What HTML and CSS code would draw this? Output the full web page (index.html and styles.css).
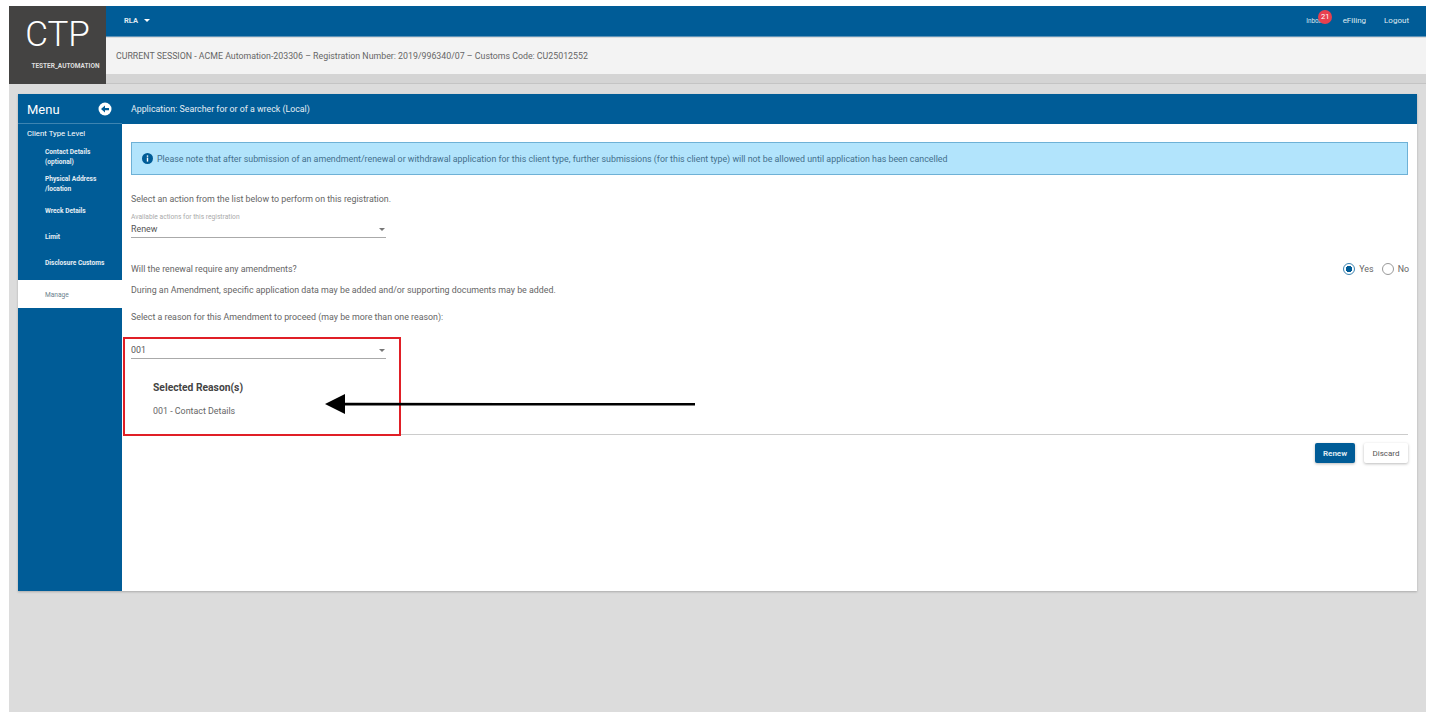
FILE: index.html
```html
<!DOCTYPE html>
<html lang="en">
<head>
  <meta charset="UTF-8" />
  <title>CTP - Manage</title>
  <link rel="stylesheet" href="styles.css">
</head>
<body>

  <div class="app">
    <header class="top">
      <div class="logo">
        <div class="logo-name">CTP</div>
        <div class="logo-user">TESTER_AUTOMATION</div>
      </div>
      <div class="top-right">
        <div class="nav">
          <div class="nav-role">RLA <span class="nav-caret"></span></div>
          <div class="nav-links">
            <span class="inbox">Inbox<span class="badge">21</span></span>
            <span>eFiling</span>
            <span>Logout</span>
          </div>
        </div>
        <div class="session">CURRENT SESSION - ACME Automation-203306 – Registration Number: 2019/996340/07 – Customs Code: CU25012552</div>
        <div class="session-foot"></div>
      </div>
    </header>

    <div class="card">
      <aside class="side">
        <div class="side-head">
          <span>Menu</span>
          <svg class="side-icon" width="14" height="14" viewBox="0 0 14 14">
            <circle cx="7" cy="7" r="6.5" fill="#fff"/>
            <path d="M3 7l4-3.4V6h4v2.2H7v2.3z" fill="#005c97"/>
          </svg>
        </div>
        <div class="side-level">Client Type Level</div>
        <ul class="side-list">
          <li class="two">Contact Details<br>(optional)</li>
          <li class="two">Physical Address<br>/location</li>
          <li>Wreck Details</li>
          <li>Limit</li>
          <li>Disclosure Customs</li>
          <li class="active">Manage</li>
        </ul>
      </aside>

      <main class="main">
        <div class="main-head">Application: Searcher for or of a wreck (Local)</div>
        <div class="main-body">
          <div class="note">
            <svg width="11" height="11" viewBox="0 0 11 11">
              <circle cx="5.5" cy="5.5" r="5.5" fill="#005c97"/>
              <rect x="4.8" y="4.6" width="1.4" height="4" fill="#fff"/>
              <rect x="4.8" y="2.4" width="1.4" height="1.4" fill="#fff"/>
            </svg>
            Please note that after submission of an amendment/renewal or withdrawal application for this client type, further submissions (for this client type) will not be allowed until application has been cancelled
          </div>

          <p class="line first">Select an action from the list below to perform on this registration.</p>
          <div class="select with-label">
            <label>Available actions for this registration</label>
            <div class="select-val">Renew<span class="caret"></span></div>
          </div>

          <div class="question">
            <span>Will the renewal require any amendments?</span>
            <div class="radios">
              <span class="radio on"></span> Yes
              <span class="radio no"></span> No
            </div>
          </div>
          <p class="line during">During an Amendment, specific application data may be added and/or supporting documents may be added.</p>
          <p class="line reason">Select a reason for this Amendment to proceed (may be more than one reason):</p>

          <div class="select code">
            <div class="select-val">001<span class="caret"></span></div>
          </div>

          <div class="selected">
            <h4>Selected Reason(s)</h4>
            <p>001 - Contact Details</p>
          </div>

          <div class="actions">
            <button class="btn primary">Renew</button>
            <button class="btn">Discard</button>
          </div>
        </div>
      </main>
    </div>
  </div>

  <div class="mark-box"></div>
  <svg class="mark-arrow" width="372" height="22" viewBox="0 0 372 22">
    <path d="M0 11L20 1v8.800L370 10v2.400L20 12.600V21z" fill="#000"/>
  </svg>

</body>
</html>
```

FILE: styles.css
```css
* {
  box-sizing: border-box;
}
html, body {
  height: 100%;
}
body {
  margin: 0;
  background: #fff;
  font-family: Roboto, "Liberation Sans", sans-serif;
  color: #555;
  overflow: hidden;
}
.app {
  position: absolute;
  left: 9px;
  top: 6px;
  width: 1417px;
  height: 706px;
  background: #dcdcdc;
}
.top {
  display: flex;
  height: 78px;
}
.logo {
  width: 97px;
  background: #444342;
  color: #fff;
  text-align: center;
}
.logo-name {
  font-size: 35px;
  font-weight: 300;
  line-height: 40px;
  padding-top: 9px;
}
.logo-user {
  font-size: 6.500px;
  font-weight: 700;
  line-height: 8px;
  margin-top: 7px;
  padding-left: 16px;
  color: #ddd;
}
.top-right {
  flex: 1;
}
.nav {
  height: 31px;
  background: #005c97;
  border-bottom: 1px solid #5d93b8;
  color: #dfeaf2;
  display: flex;
  justify-content: space-between;
  align-items: center;
  padding: 0 17px 2px 18px;
  font-size: 8px;
}
.nav-role {
  font-size: 7.500px;
  font-weight: 700;
}
.nav-caret {
  display: inline-block;
  border: 3px solid transparent;
  border-top-color: #fff;
  border-bottom: 0;
  margin: 0 0 1px 4px;
}
.nav-links {
  display: flex;
  align-items: baseline;
  gap: 18px;
}
.inbox {
  position: relative;
  font-size: 6.300px;
  padding-right: 3px;
}
.badge {
  position: absolute;
  left: 12px;
  top: -7px;
  width: 14px;
  height: 14px;
  line-height: 14px;
  text-align: center;
  border-radius: 50%;
  background: #e8404f;
  color: #fff;
  font-size: 7.500px;
}
.session {
  height: 36px;
  margin-top: 1px;
  background: #f3f3f3;
  padding-left: 10px;
  line-height: 36px;
  font-size: 8.800px;
  color: #666;
}
.session-foot {
  height: 10px;
  background: #d4d4d4;
  border-bottom: 1px solid #c4c4c4;
}
.card {
  display: flex;
  margin: 10px 9px 0;
  height: 497px;
  box-shadow: 0 1px 2px #aaa;
}
.side {
  width: 104px;
  background: #005c97;
  color: #e6eef4;
  flex: none;
}
.side-head {
  height: 30px;
  display: flex;
  justify-content: space-between;
  align-items: center;
  padding: 1px 10px 0 9px;
  font-size: 13px;
  color: #fff;
  border-bottom: 1px solid #3d84b1;
}
.side-level {
  padding: 5px 0 0 9px;
  font-size: 7.800px;
  line-height: 10px;
  height: 15px;
  color: #fff;
}
.side-list {
  list-style: none;
  margin: 8px 0 0;
  padding: 0;
  font-size: 6.600px;
  font-weight: 700;
}
.side-list li {
  height: 26px;
  padding: 5px 0 0 27px;
  line-height: 10px;
}
.side-list li.two {
  padding-top: 0;
  height: 27px;
}
.side-list li.active {
  background: #fff;
  color: #6b7f8e;
  font-weight: 400;
  height: 28px;
  padding-top: 10px;
  margin-top: 1px;
}
.main {
  flex: 1;
  background: #fff;
}
.main-head {
  height: 30px;
  background: #005c97;
  color: #e6eef4;
  padding-left: 9px;
  line-height: 31px;
  font-size: 8.800px;
}
.main-body {
  padding: 18px 9px 0 9px;
  font-size: 8.850px;
  line-height: 12px;
  color: #666;
}
.note {
  height: 33px;
  background: #b2e4fc;
  border: 1px solid #6eb1d6;
  display: flex;
  align-items: center;
  gap: 4px;
  padding-left: 10px;
  color: #44708c;
}
.line {
  margin: 0;
}
.line.first {
  margin-top: 18px;
}
.select {
  width: 255px;
  border-bottom: 1px solid #aaa;
}
.with-label {
  margin-top: 8px;
}
.select label {
  display: block;
  font-size: 6.700px;
  color: #aaa;
  line-height: 8px;
}
.select-val {
  display: flex;
  justify-content: space-between;
  align-items: center;
  height: 16px;
  color: #555;
}
.caret {
  border: 3px solid transparent;
  border-top-color: #777;
  border-bottom: 0;
  margin-right: 1px;
}
.question {
  display: flex;
  justify-content: space-between;
  align-items: center;
  margin-top: 25px;
  height: 12px;
}
.radios {
  display: flex;
  align-items: center;
  gap: 4px;
  margin-right: -1px;
}
.radio {
  width: 12px;
  height: 12px;
  border-radius: 50%;
  border: 1px solid #999;
  background: #fff;
}
.radio.on {
  border-color: #3d84b1;
  background: radial-gradient(circle, #005c97 3px, #fff 3.500px);
}
.radio.no {
  margin-left: 4px;
}
.during {
  margin-top: 9px;
}
.reason {
  margin-top: 15px;
}
.code {
  margin-top: 19px;
}
.selected {
  padding: 23px 0 0 22px;
  height: 76px;
  border-bottom: 1px solid #ccc;
}
.selected h4 {
  margin: 0;
  font-size: 10.300px;
  font-weight: 700;
  color: #444;
}
.selected p {
  margin: 11px 0 0;
  font-size: 8.900px;
}
.actions {
  display: flex;
  justify-content: flex-end;
  gap: 9px;
  margin-top: 8px;
}
.btn {
  width: 44px;
  height: 20px;
  padding: 0;
  border: 0;
  border-radius: 2px;
  background: #fff;
  color: #555;
  font-family: Roboto, sans-serif;
  font-size: 8px;
  box-shadow: 0 1px 3px #bbb;
}
.btn.primary {
  width: 40px;
  background: #005c97;
  color: #dfeaf2;
  font-weight: 700;
}
.mark-box {
  position: absolute;
  left: 123px;
  top: 337px;
  width: 278px;
  height: 99px;
  border: 2px solid #e01f26;
}
.mark-arrow {
  position: absolute;
  left: 325px;
  top: 393px;
}
```
